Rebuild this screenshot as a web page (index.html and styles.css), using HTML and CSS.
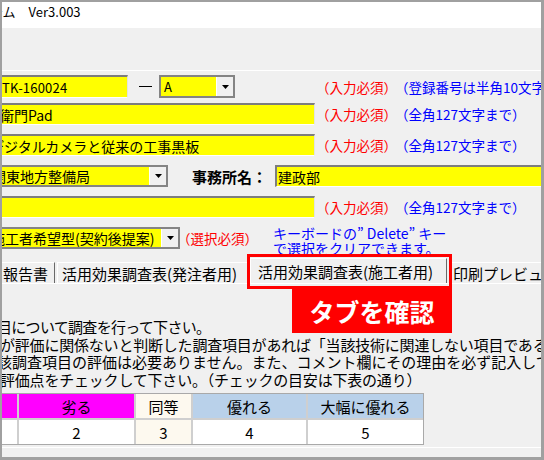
FILE: index.html
```html
<!DOCTYPE html>
<html lang="ja">
<head>
<meta charset="utf-8">
<title>システム Ver3.003</title>
<link rel="stylesheet" href="styles.css">
</head>
<body>
<div class="window">
  <div class="titlebar"><span class="title">システム　Ver3.003</span></div>
  <div class="toolbar"></div>

  <div class="form">
    <div class="row r1">
      <div class="fa">
        <div class="inp w-no code">TK-160024</div>
        <span class="dash"></span>
        <div class="combo w-rev"><span class="val code">A</span><span class="btn"><svg width="7" height="4" viewBox="0 0 7 4"><path d="M0 0H7L3.5 4Z" fill="#000"/></svg></span></div>
      </div>
      <span class="req">（入力必須）</span>
      <span class="note">（登録番号は半角10文字で入力）</span>
    </div>

    <div class="row">
      <div class="fa">
        <div class="inp w-full t2">衛門Pad</div>
      </div>
      <span class="req">（入力必須）</span>
      <span class="note">（全角127文字まで）</span>
    </div>

    <div class="row">
      <div class="fa">
        <div class="inp w-full t3">デジタルカメラと従来の工事黒板</div>
      </div>
      <span class="req">（入力必須）</span>
      <span class="note">（全角127文字まで）</span>
    </div>

    <div class="row">
      <div class="combo w-org"><span class="val t4">関東地方整備局</span><span class="btn"><svg width="7" height="4" viewBox="0 0 7 4"><path d="M0 0H7L3.5 4Z" fill="#000"/></svg></span></div>
      <span class="lbl">事務所名：</span>
      <div class="inp w-office boxed">建政部</div>
    </div>

    <div class="row">
      <div class="fa">
        <div class="inp w-full"></div>
      </div>
      <span class="req">（入力必須）</span>
      <span class="note">（全角127文字まで）</span>
    </div>

    <div class="row r6">
      <div class="combo w-type"><span class="val t6">施工者希望型(契約後提案)</span><span class="btn"><svg width="7" height="4" viewBox="0 0 7 4"><path d="M0 0H7L3.5 4Z" fill="#000"/></svg></span></div>
      <span class="req sel">（選択必須）</span>
      <span class="hint">キーボードの” Delete” キー<br>で選択をクリアできます。</span>
    </div>
  </div>

  <div class="tabs">
    <div class="tab tab-a">報告書</div>
    <div class="tab tab-b">活用効果調査表(発注者用)</div>
    <div class="tab tab-c">活用効果調査表(施工者用)</div>
    <div class="tab tab-d">印刷プレビュー</div>
  </div>

  <div class="panel">
    <p class="line l1">目について調査を行って下さい。</p>
    <p class="line l2">が評価に関係ないと判断した調査項目があれば「当該技術に関連しない項目である」</p>
    <p class="line l3">該調査項目の評価は必要ありません。また、コメント欄にその理由を必ず記入して下さい。</p>
    <p class="line l4">評価点をチェックして下さい。（チェックの目安は下表の通り）</p>

    <div class="grid">
      <div class="c mag"></div>
      <div class="c mag">劣る</div>
      <div class="c cream">同等</div>
      <div class="c blue">優れる</div>
      <div class="c blue">大幅に優れる</div>
      <div class="c wh"></div>
      <div class="c wh">2</div>
      <div class="c cream">3</div>
      <div class="c wh">4</div>
      <div class="c wh">5</div>
    </div>
    <div class="hscroll"></div>
  </div>

  <div class="callout-box"></div>
  <div class="callout-label">タブを確認</div>
</div>
</body>
</html>
```

FILE: styles.css
```css
* { box-sizing: border-box; margin: 0; padding: 0; }
html, body { margin: 0; background: #fff; }
body { font-family: "Noto Sans CJK JP", "Noto Sans", sans-serif; color: #000; }

.window {
  position: relative;
  width: 544px;
  height: 460px;
  border-style: solid;
  border-color: #a0a0a0;
  border-width: 2px 3px 3px 2px;
  background: #f0f0f0;
  overflow: hidden;
  display: flex;
  flex-direction: column;
}

.titlebar { flex: none; height: 26px; background: #fff; overflow: hidden; white-space: nowrap; }
.title { display: block; font-size: 13px; line-height: 20px; margin-left: -38px; }
.toolbar { flex: none; height: 43px; border-bottom: 1px solid #fff; }

.form { flex: none; display: flex; flex-direction: column; gap: 9px; padding-top: 4px; }
.row { display: flex; align-items: center; height: 22px; white-space: nowrap; }
.r1 { height: 23px; margin-bottom: -4px; }
.fa { flex: none; width: 313px; height: 100%; display: flex; align-items: center; }

.inp {
  flex: none;
  height: 100%;
  background: #ffff00;
  border-top: 2px solid #7d7d7d;
  border-right: 1px solid #e3e3e3;
  border-bottom: 1px solid #fff;
  font-size: 14px;
  display: flex;
  align-items: center;
  overflow: hidden;
  white-space: nowrap;
}
.inp.boxed { border-left: 2px solid #7d7d7d; padding-left: 1px; }
.code { font-size: 13px; letter-spacing: 0.2px; }
.w-no { width: 126px; }
.w-full { width: 313px; }
.w-office { width: 280px; }
.t2 { text-indent: -2px; }
.t3 { text-indent: -12px; }
.t4 { text-indent: -11px; }
.t6 { text-indent: -12px; }

.dash { flex: none; width: 13px; height: 1px; background: #000; margin-left: 11px; }

.combo {
  flex: none;
  height: 100%;
  display: flex;
  border: 2px solid #848484;
  border-left: none;
  background: #ffff00;
  overflow: hidden;
}
.w-rev { width: 76px; margin-left: 7px; border-left: 2px solid #848484; }
.w-org { width: 166px; }
.w-type { width: 178px; }
.val { flex: 1; display: flex; align-items: center; font-size: 14px; overflow: hidden; white-space: nowrap; padding-left: 1px; }
.val.code { padding-left: 3px; font-size: 13px; }
.btn { flex: none; width: 17px; height: 100%; background: #f0f0f0; border-left: 1px solid #fff; display: flex; align-items: center; justify-content: center; }

.req { flex: none; color: #ff0000; font-size: 13.5px; margin-left: 1px; }
.req.sel { margin-left: -3px; }
.note { flex: none; color: #0000ff; font-size: 13.5px; margin-left: -2px; }
.lbl { flex: none; font-size: 15px; font-weight: bold; margin-left: 24px; width: 83px; }
.hint { flex: none; align-self: flex-start; color: #0000ff; font-size: 14px; line-height: 15px; margin-left: 15px; margin-top: -1px; }

.tabs { flex: none; display: flex; align-items: flex-end; height: 25px; margin-top: 9px; white-space: nowrap; overflow: hidden; }
.tab {
  flex: none;
  height: 21px;
  display: flex;
  align-items: center;
  font-size: 15px;
  border-top: 1px solid #fff;
  border-left: 1px solid #fff;
  border-right: 1px solid #696969;
}
.tab-a { width: 53px; justify-content: flex-end; padding-right: 6px; border-left: none; }
.tab-b { width: 191px; margin-left: 2px; padding-left: 4px; }
.tab-c { width: 197px; height: 25px; margin-left: 2px; padding-left: 7px; }
.tab-d { width: 100px; margin-left: 3px; padding-left: 2px; border-right: none; }

.panel { flex: 1; border-top: 1px solid #fff; padding-top: 34px; overflow: hidden; }
.line { font-size: 15px; line-height: 17.5px; white-space: nowrap; }
.l1 { text-indent: -5px; letter-spacing: -0.7px; }
.l2 { text-indent: -2px; letter-spacing: -0.2px; }
.l3 { text-indent: -5px; }
.l4 { text-indent: -2px; letter-spacing: -0.2px; }

.grid {
  margin-top: 5px;
  display: grid;
  grid-template-columns: 15px 115px 55px 113px 115px;
  grid-template-rows: 24px 24px;
  gap: 2px;
  width: max-content;
  background: #cfcfcf;
  border: 1px solid #a9a9a9;
  border-left: none;
}
.c { display: flex; align-items: center; justify-content: center; font-size: 15px; }
.mag { background: #ff00ff; }
.cream { background: #fdf9ef; }
.blue { background: #b9d1ea; }
.wh { background: #fff; }
.hscroll { margin-top: 2px; border-top: 1px solid #fff; }

.callout-box { position: absolute; left: 245px; top: 252px; width: 205px; height: 35px; border: 3px solid #ff0000; }
.callout-label {
  position: absolute;
  left: 290px;
  top: 287px;
  width: 160px;
  height: 44px;
  background: #ff0000;
  color: #fff;
  font-size: 25px;
  font-weight: bold;
  display: flex;
  align-items: center;
  justify-content: center;
}
```
